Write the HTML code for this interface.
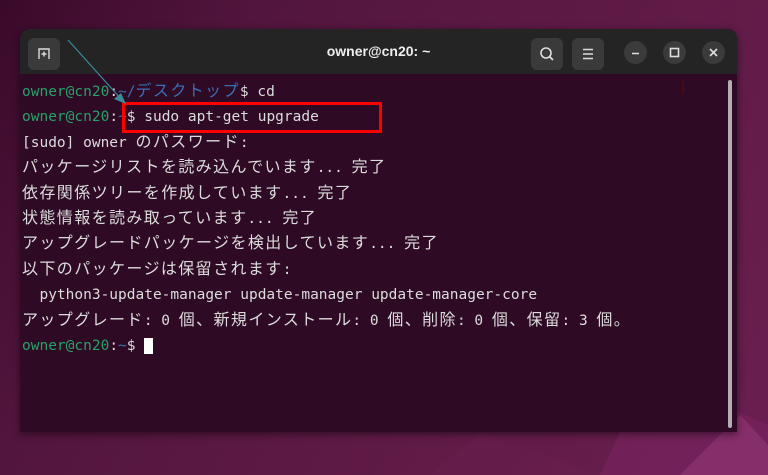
<!DOCTYPE html>
<html><head><meta charset="utf-8"><style>
html,body{margin:0;padding:0;width:768px;height:475px;overflow:hidden;}
body{background:linear-gradient(120deg,#3a0a2a 0%,#52153d 25%,#5e1a45 60%,#6a1f50 100%);position:relative;font-family:"DejaVu Sans Mono","Noto Sans CJK JP",monospace;}
.poly{position:absolute;}
.win{position:absolute;left:20px;top:29px;width:717px;height:403px;border-radius:10px 10px 0 0;overflow:hidden;box-shadow:0 2px 8px rgba(0,0,0,.5);background:#2e0a24;}
.tb{position:absolute;left:0;top:0;width:100%;height:45px;background:#242424;}
.title{position:absolute;left:0;right:0;top:14px;text-align:center;color:#eee;font:bold 14px "Liberation Sans",sans-serif;}
.btn{position:absolute;top:9px;width:32px;height:32px;border-radius:6px;background:#3a3a3a;}
.cb{position:absolute;top:12px;width:23px;height:23px;border-radius:50%;background:#3b3b3b;}
.term{position:absolute;left:2px;top:51px;color:#dcdcdc;font-size:14.5px;line-height:25.4px;white-space:pre;}
.g{color:#26a269;} .b{color:#3b6fb5;} .j{font-family:"Noto Sans CJK JP",sans-serif;font-size:16px;letter-spacing:1.4px;line-height:1;}
.sb{position:absolute;left:708px;top:51px;width:4px;height:348px;background:#b0b0b0;border-radius:2px;}
</style></head><body>
<svg class="poly" width="768" height="475" style="left:0;top:0">
<polygon points="620,432 700,395 768,425 768,475 600,475" fill="#7a2560" opacity=".6"/>
<polygon points="690,465 740,415 768,445 768,475 680,475" fill="#9a3a7a" opacity=".5"/>
<polygon points="480,432 600,475 430,475" fill="#6a2050" opacity=".4"/>
</svg>
<div class="win">
<div class="tb">
 <div class="btn" style="left:8px"><svg width="32" height="32"><path d="M11 21 V11 H21 V21 M16 13.5 V18.5 M13.5 16 H18.5" stroke="#ddd" stroke-width="1.4" fill="none"/></svg></div>
 <div class="title">owner@cn20: ~</div>
 <div class="btn" style="left:511px"><svg width="32" height="32"><circle cx="15" cy="15" r="5" stroke="#ddd" stroke-width="1.6" fill="none"/><path d="M18.5 18.5 L22 22" stroke="#ddd" stroke-width="1.8"/></svg></div>
 <div class="btn" style="left:552px"><svg width="32" height="32"><path d="M11 11.5H21M11 16H21M11 20.5H21" stroke="#ddd" stroke-width="1.6"/></svg></div>
 <div class="cb" style="left:604px"><svg width="23" height="23"><path d="M8 12.5H15" stroke="#ddd" stroke-width="1.6"/></svg></div>
 <div class="cb" style="left:643px"><svg width="23" height="23"><rect x="7.5" y="7.5" width="8" height="8" stroke="#ddd" stroke-width="1.6" fill="none"/></svg></div>
 <div class="cb" style="left:682px"><svg width="23" height="23"><path d="M8 8L15 15M15 8L8 15" stroke="#ddd" stroke-width="1.6"/></svg></div>
</div>
<div class="term"><span class="g">owner@cn20</span>:<span class="b">~/<span class="j">デスクトップ</span></span>$ cd
<span class="g">owner@cn20</span>:<span class="b">~</span>$ sudo apt-get upgrade
[sudo] owner <span class="j">のパスワード</span>:
<span class="j">パッケージリストを読み込んでいます</span>... <span class="j">完了</span>
<span class="j">依存関係ツリーを作成しています</span>... <span class="j">完了</span>
<span class="j">状態情報を読み取っています</span>... <span class="j">完了</span>
<span class="j">アップグレードパッケージを検出しています</span>... <span class="j">完了</span>
<span class="j">以下のパッケージは保留されます</span>:
  python3-update-manager update-manager update-manager-core
<span class="j">アップグレード</span>: 0 <span class="j">個、新規インストール</span>: 0 <span class="j">個、削除</span>: 0 <span class="j">個、保留</span>: 3 <span class="j">個。</span>
<span class="g">owner@cn20</span>:<span class="b">~</span>$ <span style="background:#fff">&nbsp;</span></div>
<div style="position:absolute;left:662px;top:51px;width:2px;height:14px;background:#4a0a10"></div>
<div class="sb"></div>
</div>
<div style="position:absolute;left:122px;top:102px;width:254px;height:25px;border:3px solid #ff0000;"></div>
<svg class="poly" width="768" height="475" style="left:0;top:0"><path d="M68 40 L122 100" stroke="#3a8a9a" stroke-width="1.2"/><polygon points="126,104 114,99 121,93" fill="#3a8a9a"/></svg>
</body></html>
